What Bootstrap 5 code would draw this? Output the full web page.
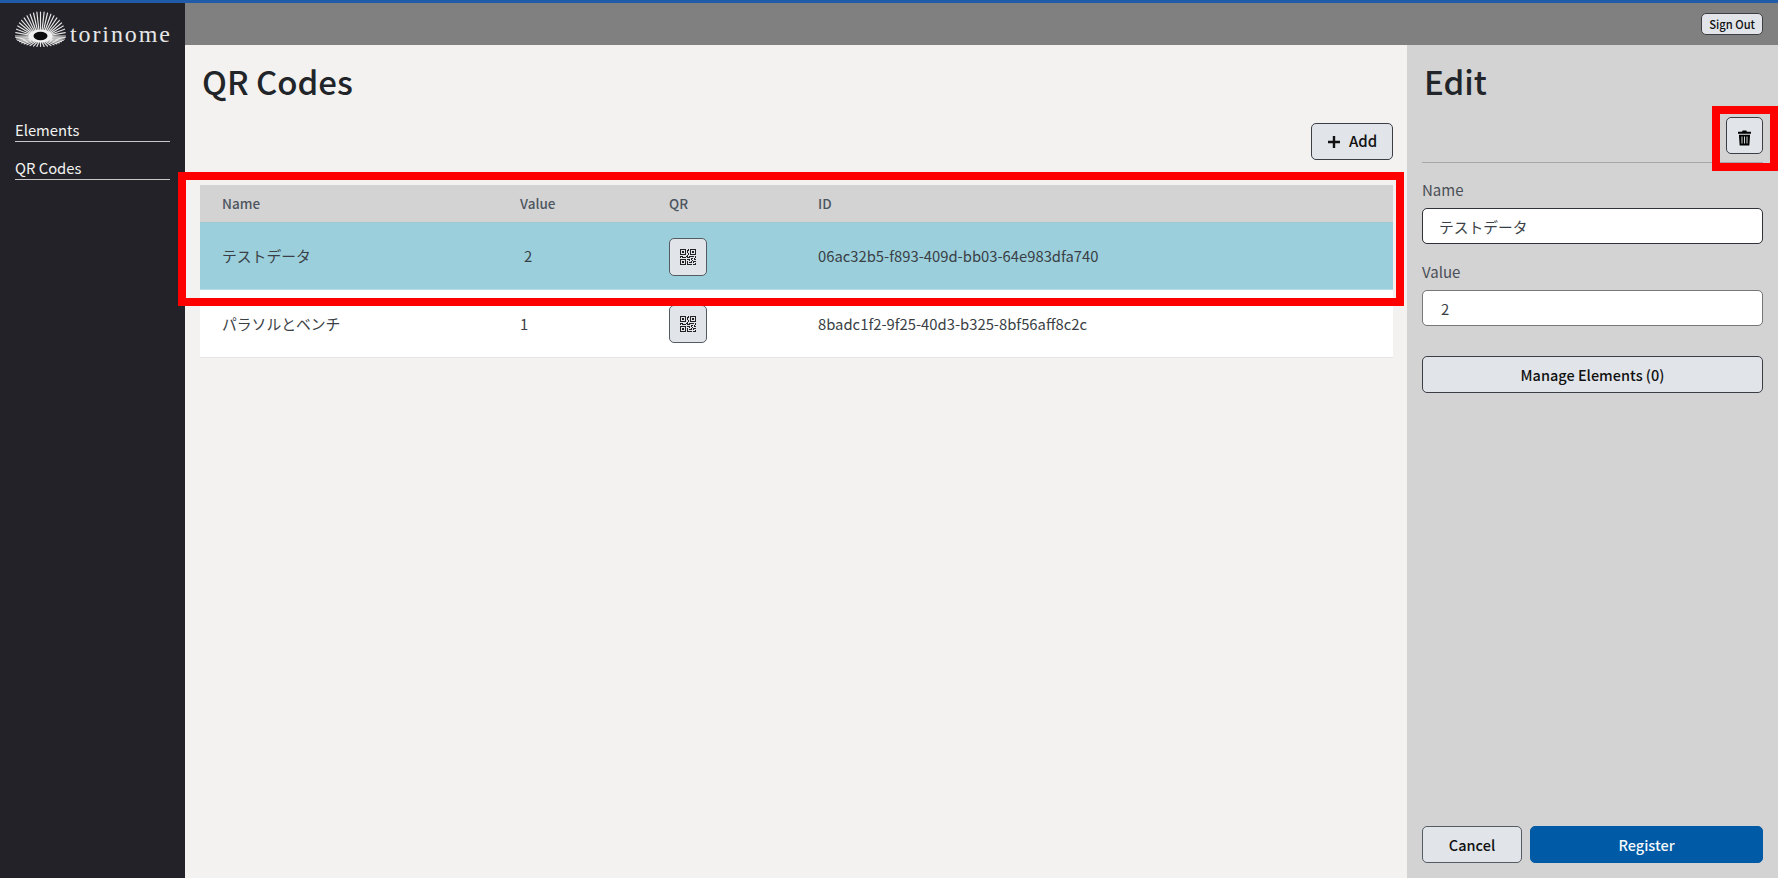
<!DOCTYPE html>
<html lang="ja">
<head>
<meta charset="utf-8">
<title>QR Codes</title>
<link href="https://cdn.jsdelivr.net/npm/bootstrap@5.3.0/dist/css/bootstrap.min.css" rel="stylesheet">
<style>
html,body{height:100%;}
body{font-family:"Noto Sans CJK JP","Noto Sans",sans-serif;font-size:16px;color:#212529;background:#f3f2f0;overflow:hidden;}
.shell{height:878px;border-top:3px solid #1f5ba8;position:relative;}
.side{width:185px;background:#222228;color:#f3f2f0;padding:8px 15px 0;}
.brand{height:34px;gap:3px;}
.brand-word{font-family:"Liberation Serif",serif;font-size:24px;letter-spacing:1.9px;color:#e6e6e6;line-height:1;margin-top:11px;}
.side-nav{margin-top:73px;}
.side-link{display:block;color:#f3f2f0;text-decoration:none;border-bottom:1px solid #c8c8c8;font-size:14.8px;line-height:23px;margin-bottom:14px;height:24px;}
.topbar{height:42px;background:#808080;padding:10px 15px 0 0;}
.tbtn{background:#e1e5ea;border:1px solid #3b3f45;color:#111;}
.tbtn:hover{background:#e1e5ea;border-color:#3b3f45;color:#111;}
.signout{font-size:11.2px;font-weight:500;line-height:18px;padding:1px 7px;border-radius:5px;height:22px;}
.main-area{background:#f3f2f0;padding:0 14px 0 15px;}
.page-title{font-size:33px;font-weight:500;line-height:52px;margin:10px 0 0 2px;}
.add-btn{height:37px;width:82px;padding:0;font-size:15px;font-weight:500;border-radius:5px;margin-top:16px;}
.qr-table{margin:25px 0 0;font-size:14.8px;--bs-table-bg:transparent;table-layout:fixed;}
.qr-table th{background:#d3d3d3;color:#4d5560;font-size:13.5px;font-weight:500;height:37px;padding:0 0 0 22px;vertical-align:middle;border-bottom:1px solid #9fc9d3;}
.qr-table td{height:68px;padding:2px 0 0 22px;vertical-align:middle;color:#3a3f46;background:#fff;border-bottom:1px solid #e4e4e4;}
.qr-table tr.sel td{background:#9acfdb;height:67px;border-bottom:1px solid #b9dde6;}
.qr-btn{width:38px;height:38px;padding:0;border-radius:5px;border-color:#555b62;}
.panel{width:371px;background:#d3d3d3;padding:0 15px;height:833px;}
.panel-title{font-size:33px;font-weight:500;line-height:52px;margin:10px 0 0 2px;}
.trash-btn{width:37px;height:37px;padding:0;border-radius:5px;}
.panel-rule{border-top:1.5px solid #a8a8a8;opacity:1;margin:8px 0 0;}
.field-label{font-size:15px;color:#4a4f57;line-height:22px;margin:0 0 7px;}
.panel input.form-control{height:36px;border:1px solid #2f3338;border-radius:5px;color:#3a3f46;font-size:14.75px;padding:0 16px;}
.panel input.value-in{border-color:#777;padding:0 18px;}
.manage{height:37px;font-size:14.5px;font-weight:500;border-radius:5px;padding:0;}
.cancel{width:100px;height:37px;padding:0;font-size:14.5px;font-weight:500;border-radius:5px;border-color:#555b62;}
.register{height:37px;padding:0;background:#005aa5;border:1px solid #005aa5;color:#f5f8fb;font-size:14.5px;font-weight:500;border-radius:5px;}
.register:hover{background:#005aa5;border-color:#005aa5;color:#f5f8fb;}
.mark-box{position:absolute;border:8px solid #f00;pointer-events:none;}
.mark-a{left:178px;top:169px;width:1226px;height:134px;}
.mark-b{left:1712px;top:103px;width:66px;height:65px;}
</style>
</head>
<body>
<div class="shell d-flex">
  <nav class="side flex-shrink-0">
    <div class="brand d-flex align-items-start">
      <svg width="52" height="36" viewBox="0 0 52 36" class="flex-shrink-0" aria-hidden="true">
        <g stroke="#e4e4e4" stroke-width="1.2" stroke-linecap="round" id="rays"></g>
        <ellipse cx="25.5" cy="25" rx="12" ry="6.5" fill="#f0f0f0"/>
        <ellipse cx="25.5" cy="25" rx="7" ry="4.2" fill="#0c0c0e"/>
      </svg>
      <span class="brand-word">torinome</span>
    </div>
    <div class="side-nav">
      <a class="side-link" href="#">Elements</a>
      <a class="side-link" href="#">QR Codes</a>
    </div>
  </nav>
  <div class="flex-grow-1 d-flex flex-column">
    <div class="topbar d-flex justify-content-end align-items-start flex-shrink-0">
      <button class="btn tbtn signout" type="button">Sign Out</button>
    </div>
    <div class="d-flex flex-grow-1">
      <main class="main-area flex-grow-1">
        <h1 class="page-title">QR Codes</h1>
        <div class="d-flex justify-content-end">
          <button class="btn tbtn add-btn d-flex align-items-center justify-content-center gap-2" type="button">
            <svg width="14" height="14" viewBox="0 0 14 14" aria-hidden="true"><path d="M7 1v12M1 7h12" stroke="#111" stroke-width="2.4"/></svg>Add
          </button>
        </div>
        <table class="table qr-table">
          <colgroup><col style="width:298px"><col style="width:149px"><col style="width:149px"><col></colgroup>
          <thead><tr><th>Name</th><th>Value</th><th>QR</th><th>ID</th></tr></thead>
          <tbody>
            <tr class="sel">
              <td>テストデータ</td><td><span class="ps-1">2</span></td>
              <td><button class="btn tbtn qr-btn d-flex align-items-center justify-content-center" type="button"><svg width="16" height="16" viewBox="0 0 16 16" aria-hidden="true"><use href="#qr"/></svg></button></td>
              <td>06ac32b5-f893-409d-bb03-64e983dfa740</td>
            </tr>
            <tr>
              <td>パラソルとベンチ</td><td>1</td>
              <td><button class="btn tbtn qr-btn d-flex align-items-center justify-content-center" type="button"><svg width="16" height="16" viewBox="0 0 16 16" aria-hidden="true"><use href="#qr"/></svg></button></td>
              <td>8badc1f2-9f25-40d3-b325-8bf56aff8c2c</td>
            </tr>
          </tbody>
        </table>
      </main>
      <aside class="panel flex-shrink-0 d-flex flex-column">
        <h2 class="panel-title">Edit</h2>
        <div class="d-flex justify-content-end" style="margin-top:10px">
          <button class="btn tbtn trash-btn" type="button">
            <svg width="13" height="16" viewBox="0 0 14 16" aria-hidden="true"><path d="M5 0h4l.6 1.3H14v2H0v-2h4.4zM1 4.500h12l-.8 11.500H1.800zM3.800 6.500v7.500h1V6.500zM6.500 6.500v7.500h1V6.500zM9.200 6.500v7.500h1V6.500z" fill="#000" fill-rule="evenodd"/></svg>
          </button>
        </div>
        <hr class="panel-rule">
        <label class="field-label" style="margin-top:16px">Name</label>
        <input class="form-control" type="text" value="テストデータ">
        <label class="field-label" style="margin-top:17px">Value</label>
        <input class="form-control value-in" type="text" value="2">
        <button class="btn tbtn manage w-100" type="button" style="margin-top:30px">Manage Elements (0)</button>
        <div class="d-flex gap-2 mt-auto" style="margin-bottom:15px">
          <button class="btn tbtn cancel flex-shrink-0" type="button">Cancel</button>
          <button class="btn register flex-grow-1" type="button">Register</button>
        </div>
      </aside>
    </div>
  </div>
  <div class="mark-box mark-a"></div>
  <div class="mark-box mark-b"></div>
</div>
<svg width="0" height="0" class="position-absolute" aria-hidden="true">
  <defs>
    <g id="qr" fill="#222">
      <path d="M2 2h2v2H2V2Z"/>
      <path d="M6 0v6H0V0h6ZM5 1H1v4h4V1ZM4 12H2v2h2v-2Z"/>
      <path d="M6 10v6H0v-6h6Zm-5 1v4h4v-4H1Zm11-9h2v2h-2V2Z"/>
      <path d="M10 0v6h6V0h-6Zm5 1v4h-4V1h4ZM8 1V0h1v2H8v2H7V1h1Zm0 5V4h1v2H8ZM6 8V7h1V6h1v2h1V7h5v1h-4v1H7V8H6Zm0 0v1H2V8H1v1H0V7h3v1h3Zm10 1h-1V7h1v2Zm-1 0h-1v2h2v-1h-1V9Zm-4 0h2v1h-1v1h-1V9Zm2 3v-1h-1v1h-1v1H9v1h3v-2h1Zm0 0h3v1h-2v1h-1v-2Zm-4-1v1h1v-2H7v1h2Z"/>
      <path d="M7 12h1v3h4v1H7v-4Zm9 2v2h-3v-1h2v-1h1Z"/>
    </g>
  </defs>
</svg>
<script src="https://cdn.jsdelivr.net/npm/bootstrap@5.3.0/dist/js/bootstrap.bundle.min.js"></script>
<script>
  var g=document.getElementById('rays'),s='';
  for(var i=0;i<44;i++){
    var a=(i/44)*Math.PI*2,c=Math.cos(a),d=Math.sin(a);
    var up=d<0;
    var rx=25,ry=up?24:10.5;
    var x1=25.5+c*11,y1=25+d*6,x2=25.5+c*rx,y2=25+d*ry;
    s+='<line x1="'+x1.toFixed(1)+'" y1="'+y1.toFixed(1)+'" x2="'+x2.toFixed(1)+'" y2="'+y2.toFixed(1)+'"/>';
  }
  g.innerHTML=s;
</script>
</body>
</html>
